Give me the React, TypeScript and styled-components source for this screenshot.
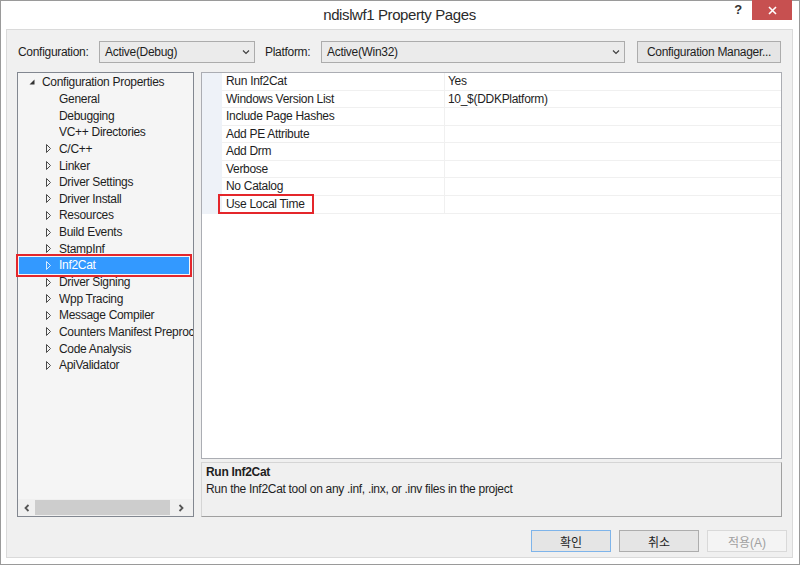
import React from 'react';
import styled, { createGlobalStyle } from 'styled-components';

const GlobalStyle = createGlobalStyle`
  html, body {
    margin: 0;
    padding: 0;
    background: #ffffff;
  }
  body {
    font-family: "Liberation Sans", "Noto Sans CJK KR", sans-serif;
    font-size: 12px;
    letter-spacing: -0.3px;
    color: #1e1e1e;
  }
  * {
    box-sizing: border-box;
  }
`;

const Window = styled.div`
  width: 800px;
  height: 565px;
  border: 1px solid #9a9a9a;
  background: #ffffff;
  display: flex;
  flex-direction: column;
  padding: 0 6px 6px 5px;
`;

const TitleBar = styled.div`
  height: 28px;
  flex: none;
  display: grid;
  grid-template-columns: 1fr auto 1fr;
  align-items: start;
`;

const Title = styled.div`
  grid-column: 2;
  line-height: 28px;
  font-size: 15px;
  letter-spacing: -0.4px;
  color: #2b2b2b;
`;

const TitleControls = styled.div`
  grid-column: 3;
  justify-self: end;
  display: flex;
  align-items: flex-start;
  margin-top: -1px;
  margin-right: 1px;
`;

const HelpButton = styled.div`
  width: 28px;
  height: 20px;
  line-height: 20px;
  text-align: center;
  font-weight: bold;
  font-size: 13px;
  color: #333;
`;

const CloseButton = styled.div`
  width: 40px;
  height: 20px;
  background: #c75050;
  display: flex;
  align-items: center;
  justify-content: center;
`;

const Panel = styled.div`
  flex: 1;
  background: #f0f0f0;
  border: 1px solid #dadada;
  padding: 11px 10px 5px 10px;
  display: flex;
  flex-direction: column;
`;

const ConfigRow = styled.div`
  display: flex;
  align-items: center;
  height: 22px;
  flex: none;
`;

const FieldLabel = styled.div<{ $w: number; $pl: number }>`
  width: ${p => p.$w}px;
  padding-left: ${p => p.$pl}px;
  flex: none;
`;

const Combo = styled.div<{ $w: number }>`
  width: ${p => p.$w}px;
  height: 22px;
  flex: none;
  border: 1px solid #acacac;
  background: #ebebeb;
  display: flex;
  align-items: center;
  justify-content: space-between;
  padding: 0 4px 0 5px;
`;

const ToolButton = styled.div`
  margin-left: 12px;
  width: 144px;
  height: 22px;
  border: 1px solid #acacac;
  background: #e5e5e5;
  display: flex;
  align-items: center;
  justify-content: center;
`;

const Main = styled.div`
  display: flex;
  gap: 7px;
  margin-top: 9px;
  height: 445px;
  flex: none;
`;

const Tree = styled.div`
  width: 177px;
  flex: none;
  border: 1px solid #828790;
  background: #f5f5f5;
  display: flex;
  flex-direction: column;
`;

const TreeList = styled.div`
  flex: 1;
  padding-top: 1px;
  display: flex;
  flex-direction: column;
`;

const TreeRow = styled.div<{ $level: number; $selected?: boolean }>`
  height: 16.65px;
  flex: none;
  display: flex;
  align-items: center;
  white-space: nowrap;
  padding-left: ${p => p.$level * 17 + (p.$selected ? 10 : 11)}px;
  margin: ${p => (p.$selected ? '0 4px 0 1px' : '0')};
  background: ${p => (p.$selected ? '#3399ff' : 'transparent')};
  color: ${p => (p.$selected ? '#ffffff' : '#1e1e1e')};
  outline: ${p => (p.$selected ? '2px solid #e4262b' : 'none')};
  outline-offset: 1px;
`;

const Expander = styled.span`
  width: 13px;
  flex: none;
  display: flex;
  align-items: center;
`;

const TreeText = styled.span`
  flex: 1;
  min-width: 0;
  overflow: hidden;
`;

const HScroll = styled.div`
  height: 17px;
  flex: none;
  display: flex;
  align-items: center;
  background: #f0f0f0;
`;

const ScrollArrow = styled.div<{ $right?: boolean }>`
  width: 17px;
  height: 15px;
  flex: none;
  display: flex;
  align-items: center;
  justify-content: center;
  margin-right: ${p => (p.$right ? '4px' : '0')};
`;

const ScrollThumb = styled.div`
  width: 135px;
  height: 15px;
  background: #cdcdcd;
  flex: none;
`;

const ScrollSpacer = styled.div`
  flex: 1;
`;

const RightColumn = styled.div`
  flex: 1;
  display: flex;
  flex-direction: column;
  gap: 3px;
`;

const Grid = styled.div`
  height: 387px;
  flex: none;
  border: 1px solid #abadb3;
  background: #ffffff;
`;

const GridRow = styled.div`
  display: flex;
  height: 17.57px;
`;

const Gutter = styled.div`
  width: 20px;
  flex: none;
  background: #eef2f8;
`;

const Cell = styled.div<{ $name?: boolean }>`
  width: ${p => (p.$name ? '223px' : 'auto')};
  flex: ${p => (p.$name ? 'none' : '1')};
  border-bottom: 1px solid #f0f0f0;
  border-right: ${p => (p.$name ? '1px solid #f0f0f0' : 'none')};
  padding-left: ${p => (p.$name ? '4px' : '3px')};
  line-height: 16.5px;
  white-space: nowrap;
`;

const Marked = styled.span`
  display: inline-block;
  margin-left: -6px;
  padding: 0 7px 0 6px;
  line-height: 16px;
  outline: 2px solid #e4262b;
  outline-offset: 0;
`;

const Description = styled.div`
  flex: 1;
  border: 1px solid;
  border-color: #d5d5d5 #a0a0a0 #a0a0a0 #d5d5d5;
  background: #f0f0f0;
  padding: 1px 4px;
  line-height: 17px;
`;

const DescTitle = styled.div`
  font-weight: bold;
`;

const Footer = styled.div`
  display: flex;
  justify-content: flex-end;
  gap: 8px;
  margin-top: 13px;
  margin-right: -5px;
  flex: none;
`;

const DialogButton = styled.div<{ $default?: boolean; $disabled?: boolean }>`
  width: 80px;
  height: 22px;
  display: flex;
  align-items: center;
  justify-content: center;
  border: 1px solid ${p => (p.$default ? '#7eb4ea' : p.$disabled ? '#d9d9d9' : '#adadad')};
  background: ${p => (p.$disabled ? '#f4f4f4' : '#e5e5e5')};
  color: ${p => (p.$disabled ? '#a0a0a0' : '#1e1e1e')};
  letter-spacing: 0;
`;

const Chevron = () => (
  <svg width="8" height="6" viewBox="0 0 8 6">
    <path d="M1 1.5 L4 4.5 L7 1.5" fill="none" stroke="#404040" strokeWidth="1.2" />
  </svg>
);

const OpenTriangle = ({ light }: { light?: boolean }) => (
  <svg width="6" height="9" viewBox="0 0 6 9">
    <path d="M0.5 0.5 L4.5 4.5 L0.5 8.5 Z" fill="none" stroke={light ? '#d8ecff' : '#4a4a4a'} strokeWidth="1" />
  </svg>
);

const ExpandedTriangle = () => (
  <svg width="6" height="6" viewBox="0 0 6 6">
    <path d="M5.5 0.5 L5.5 5.5 L0.5 5.5 Z" fill="#333" />
  </svg>
);

const ArrowGlyph = ({ right }: { right?: boolean }) => (
  <svg width="6" height="8" viewBox="0 0 6 8">
    <path
      d={right ? 'M1.5 1 L4.5 4 L1.5 7' : 'M4.5 1 L1.5 4 L4.5 7'}
      fill="none"
      stroke="#555"
      strokeWidth="1.8"
    />
  </svg>
);

const CloseGlyph = () => (
  <svg width="9" height="9" viewBox="0 0 9 9">
    <path d="M1 1 L8 8 M8 1 L1 8" stroke="#ffffff" strokeWidth="1.6" />
  </svg>
);

type TreeItem = { label: string; level: number; expandable?: boolean; open?: boolean };

const treeItems: TreeItem[] = [
  { label: 'Configuration Properties', level: 0, expandable: true, open: true },
  { label: 'General', level: 1 },
  { label: 'Debugging', level: 1 },
  { label: 'VC++ Directories', level: 1 },
  { label: 'C/C++', level: 1, expandable: true },
  { label: 'Linker', level: 1, expandable: true },
  { label: 'Driver Settings', level: 1, expandable: true },
  { label: 'Driver Install', level: 1, expandable: true },
  { label: 'Resources', level: 1, expandable: true },
  { label: 'Build Events', level: 1, expandable: true },
  { label: 'StampInf', level: 1, expandable: true },
  { label: 'Inf2Cat', level: 1, expandable: true },
  { label: 'Driver Signing', level: 1, expandable: true },
  { label: 'Wpp Tracing', level: 1, expandable: true },
  { label: 'Message Compiler', level: 1, expandable: true },
  { label: 'Counters Manifest Preprocessor', level: 1, expandable: true },
  { label: 'Code Analysis', level: 1, expandable: true },
  { label: 'ApiValidator', level: 1, expandable: true },
];

const properties = [
  { name: 'Run Inf2Cat', value: 'Yes' },
  { name: 'Windows Version List', value: '10_$(DDKPlatform)' },
  { name: 'Include Page Hashes', value: '' },
  { name: 'Add PE Attribute', value: '' },
  { name: 'Add Drm', value: '' },
  { name: 'Verbose', value: '' },
  { name: 'No Catalog', value: '' },
  { name: 'Use Local Time', value: '', marked: true },
];

const SELECTED = 'Inf2Cat';

export default function App() {
  return (
    <>
      <GlobalStyle />
      <Window>
        <TitleBar>
          <Title>ndislwf1 Property Pages</Title>
          <TitleControls>
            <HelpButton>?</HelpButton>
            <CloseButton>
              <CloseGlyph />
            </CloseButton>
          </TitleControls>
        </TitleBar>
        <Panel>
          <ConfigRow>
            <FieldLabel $w={82} $pl={1}>Configuration:</FieldLabel>
            <Combo $w={156}>
              <span>Active(Debug)</span>
              <Chevron />
            </Combo>
            <FieldLabel $w={66} $pl={10}>Platform:</FieldLabel>
            <Combo $w={304}>
              <span>Active(Win32)</span>
              <Chevron />
            </Combo>
            <ToolButton>Configuration Manager...</ToolButton>
          </ConfigRow>
          <Main>
            <Tree>
              <TreeList>
                {treeItems.map(item => {
                  const selected = item.label === SELECTED;
                  return (
                    <TreeRow key={item.label} $level={item.level} $selected={selected}>
                      <Expander>
                        {item.expandable && (item.open ? <ExpandedTriangle /> : <OpenTriangle light={selected} />)}
                      </Expander>
                      <TreeText>{item.label}</TreeText>
                    </TreeRow>
                  );
                })}
              </TreeList>
              <HScroll>
                <ScrollArrow>
                  <ArrowGlyph />
                </ScrollArrow>
                <ScrollThumb />
                <ScrollSpacer />
                <ScrollArrow $right>
                  <ArrowGlyph right />
                </ScrollArrow>
              </HScroll>
            </Tree>
            <RightColumn>
              <Grid>
                {properties.map(prop => (
                  <GridRow key={prop.name}>
                    <Gutter />
                    <Cell $name>{prop.marked ? <Marked>{prop.name}</Marked> : prop.name}</Cell>
                    <Cell>{prop.value}</Cell>
                  </GridRow>
                ))}
              </Grid>
              <Description>
                <DescTitle>Run Inf2Cat</DescTitle>
                <div>Run the Inf2Cat tool on any .inf, .inx, or .inv files in the project</div>
              </Description>
            </RightColumn>
          </Main>
          <Footer>
            <DialogButton $default>확인</DialogButton>
            <DialogButton>취소</DialogButton>
            <DialogButton $disabled>적용(A)</DialogButton>
          </Footer>
        </Panel>
      </Window>
    </>
  );
}
